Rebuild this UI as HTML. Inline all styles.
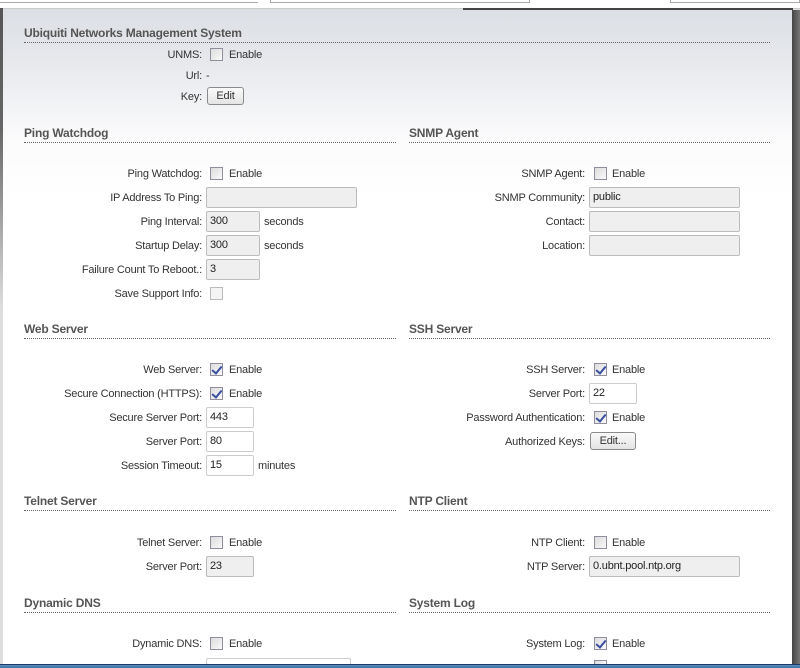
<!DOCTYPE html>
<html style="height:668px;overflow:hidden"><head><meta charset="utf-8"><style>
*{margin:0;padding:0;box-sizing:border-box}
body{width:800px;height:668px;overflow:hidden;position:relative;font-family:"Liberation Sans",Arial,sans-serif;font-size:11px;letter-spacing:-0.2px;color:#333;background:linear-gradient(#dadde3 0px,#e6e8ec 60px,#fbfbfc 140px,#fff 200px)}
.a{position:absolute;white-space:nowrap}
.h{position:absolute;font-weight:bold;font-size:12px;color:#555;border-bottom:1px dotted #666;height:18px;line-height:16px}
.l{position:absolute;left:0;width:202px;text-align:right;line-height:16px}
.r{position:absolute;left:400px;width:185px;text-align:right;line-height:16px}
.cb{position:absolute;width:13px;height:13px;border:1px solid #8f8f9d;background:linear-gradient(135deg,#dcdcdc,#fafafa)}
.ck::after{content:"";position:absolute;left:3px;top:0px;width:4px;height:8px;border:solid #3a4d9f;border-width:0 2px 2px 0;transform:rotate(40deg)}
.t{position:absolute;line-height:16px}
.in{position:absolute;height:21px;border:1px solid #bbb;background:#efefef;border-radius:2px;padding-left:3px;line-height:19px;color:#222}
.w{background:#fff;border-color:#ccc}
.btn{position:absolute;border:1px solid #8a8a8a;border-radius:3px;background:linear-gradient(#fafafa,#e4e4e4);text-align:center;line-height:16px;height:18px}
</style></head><body>
<div class="a" style="left:0;top:0;width:800px;height:9px;background:#fff;border-bottom:1px solid #ccc"></div>
<div class="a" style="left:0;top:2px;width:258px;height:1px;background:#aaa"></div>
<div class="a" style="left:270px;top:0;width:260px;height:3px;border:1px solid #aaa;border-top:0;background:#fff"></div>
<div class="a" style="left:670px;top:0;width:130px;height:3px;border:1px solid #aaa;border-top:0;background:#fff"></div>
<div class="a" style="left:463px;top:8px;width:330px;height:2px;background:#444"></div>
<div class="a" style="left:0;top:8px;width:3px;height:660px;background:linear-gradient(#555 0,#666 120px,#ddd 300px)"></div>
<div class="a" style="left:792px;top:10px;width:8px;height:658px;background:linear-gradient(90deg,#444,#777)"></div>

<div class="h" style="left:24px;top:25px;width:746px">Ubiquiti Networks Management System</div>
<div class="l" style="top:47px">UNMS:</div><div class="cb" style="left:210px;top:48px"></div><div class="t" style="left:229px;top:47px">Enable</div>
<div class="l" style="top:68px">Url:</div><div class="t" style="left:206px;top:68px">-</div>
<div class="l" style="top:89px">Key:</div><div class="btn" style="left:207px;top:87px;width:37px">Edit</div>

<div class="h" style="left:24px;top:125px;width:372px">Ping Watchdog</div>
<div class="h" style="left:409px;top:125px;width:361px">SNMP Agent</div>
<div class="l" style="top:166px">Ping Watchdog:</div><div class="cb" style="left:210px;top:167px"></div><div class="t" style="left:229px;top:166px">Enable</div>
<div class="l" style="top:190px">IP Address To Ping:</div><div class="in" style="left:206px;top:187px;width:151px"></div>
<div class="l" style="top:214px">Ping Interval:</div><div class="in" style="left:206px;top:211px;width:54px">300</div><div class="t" style="left:264px;top:214px">seconds</div>
<div class="l" style="top:238px">Startup Delay:</div><div class="in" style="left:206px;top:235px;width:54px">300</div><div class="t" style="left:264px;top:238px">seconds</div>
<div class="l" style="top:262px">Failure Count To Reboot.:</div><div class="in" style="left:206px;top:259px;width:54px">3</div>
<div class="l" style="top:286px">Save Support Info:</div><div class="cb" style="left:210px;top:287px;background:#f4f4f4;border-color:#bbb"></div>
<div class="r" style="top:166px">SNMP Agent:</div><div class="cb" style="left:594px;top:167px"></div><div class="t" style="left:612px;top:166px">Enable</div>
<div class="r" style="top:190px">SNMP Community:</div><div class="in" style="left:589px;top:187px;width:151px">public</div>
<div class="r" style="top:214px">Contact:</div><div class="in" style="left:589px;top:211px;width:151px"></div>
<div class="r" style="top:238px">Location:</div><div class="in" style="left:589px;top:235px;width:151px"></div>

<div class="h" style="left:24px;top:321px;width:372px">Web Server</div>
<div class="h" style="left:409px;top:321px;width:361px">SSH Server</div>
<div class="l" style="top:362px">Web Server:</div><div class="cb ck" style="left:210px;top:363px"></div><div class="t" style="left:229px;top:362px">Enable</div>
<div class="l" style="top:386px">Secure Connection (HTTPS):</div><div class="cb ck" style="left:210px;top:387px"></div><div class="t" style="left:229px;top:386px">Enable</div>
<div class="l" style="top:410px">Secure Server Port:</div><div class="in w" style="left:206px;top:407px;width:48px">443</div>
<div class="l" style="top:434px">Server Port:</div><div class="in w" style="left:206px;top:431px;width:48px">80</div>
<div class="l" style="top:458px">Session Timeout:</div><div class="in w" style="left:206px;top:455px;width:48px">15</div><div class="t" style="left:258px;top:458px">minutes</div>
<div class="r" style="top:362px">SSH Server:</div><div class="cb ck" style="left:594px;top:363px"></div><div class="t" style="left:612px;top:362px">Enable</div>
<div class="r" style="top:386px">Server Port:</div><div class="in w" style="left:589px;top:383px;width:48px">22</div>
<div class="r" style="top:410px">Password Authentication:</div><div class="cb ck" style="left:594px;top:411px"></div><div class="t" style="left:612px;top:410px">Enable</div>
<div class="r" style="top:434px">Authorized Keys:</div><div class="btn" style="left:590px;top:432px;width:46px">Edit...</div>

<div class="h" style="left:24px;top:493px;width:372px">Telnet Server</div>
<div class="h" style="left:409px;top:493px;width:361px">NTP Client</div>
<div class="l" style="top:535px">Telnet Server:</div><div class="cb" style="left:210px;top:536px"></div><div class="t" style="left:229px;top:535px">Enable</div>
<div class="l" style="top:559px">Server Port:</div><div class="in" style="left:206px;top:556px;width:48px">23</div>
<div class="r" style="top:535px">NTP Client:</div><div class="cb" style="left:594px;top:536px"></div><div class="t" style="left:612px;top:535px">Enable</div>
<div class="r" style="top:559px">NTP Server:</div><div class="in" style="left:589px;top:556px;width:151px">0.ubnt.pool.ntp.org</div>

<div class="h" style="left:24px;top:595px;width:372px">Dynamic DNS</div>
<div class="h" style="left:409px;top:595px;width:361px">System Log</div>
<div class="l" style="top:636px">Dynamic DNS:</div><div class="cb" style="left:210px;top:637px"></div><div class="t" style="left:229px;top:636px">Enable</div>
<div class="r" style="top:636px">System Log:</div><div class="cb ck" style="left:594px;top:637px"></div><div class="t" style="left:612px;top:636px">Enable</div>
<div class="in w" style="left:206px;top:658px;width:145px;height:7px"></div>
<div class="cb" style="left:594px;top:660px;height:5px"></div>

<div class="a" style="left:0;top:664px;width:800px;height:4px;background:linear-gradient(#5d8fc0,#3c6fa6);border-top:1px solid #1b3b66"></div>
</body></html>
